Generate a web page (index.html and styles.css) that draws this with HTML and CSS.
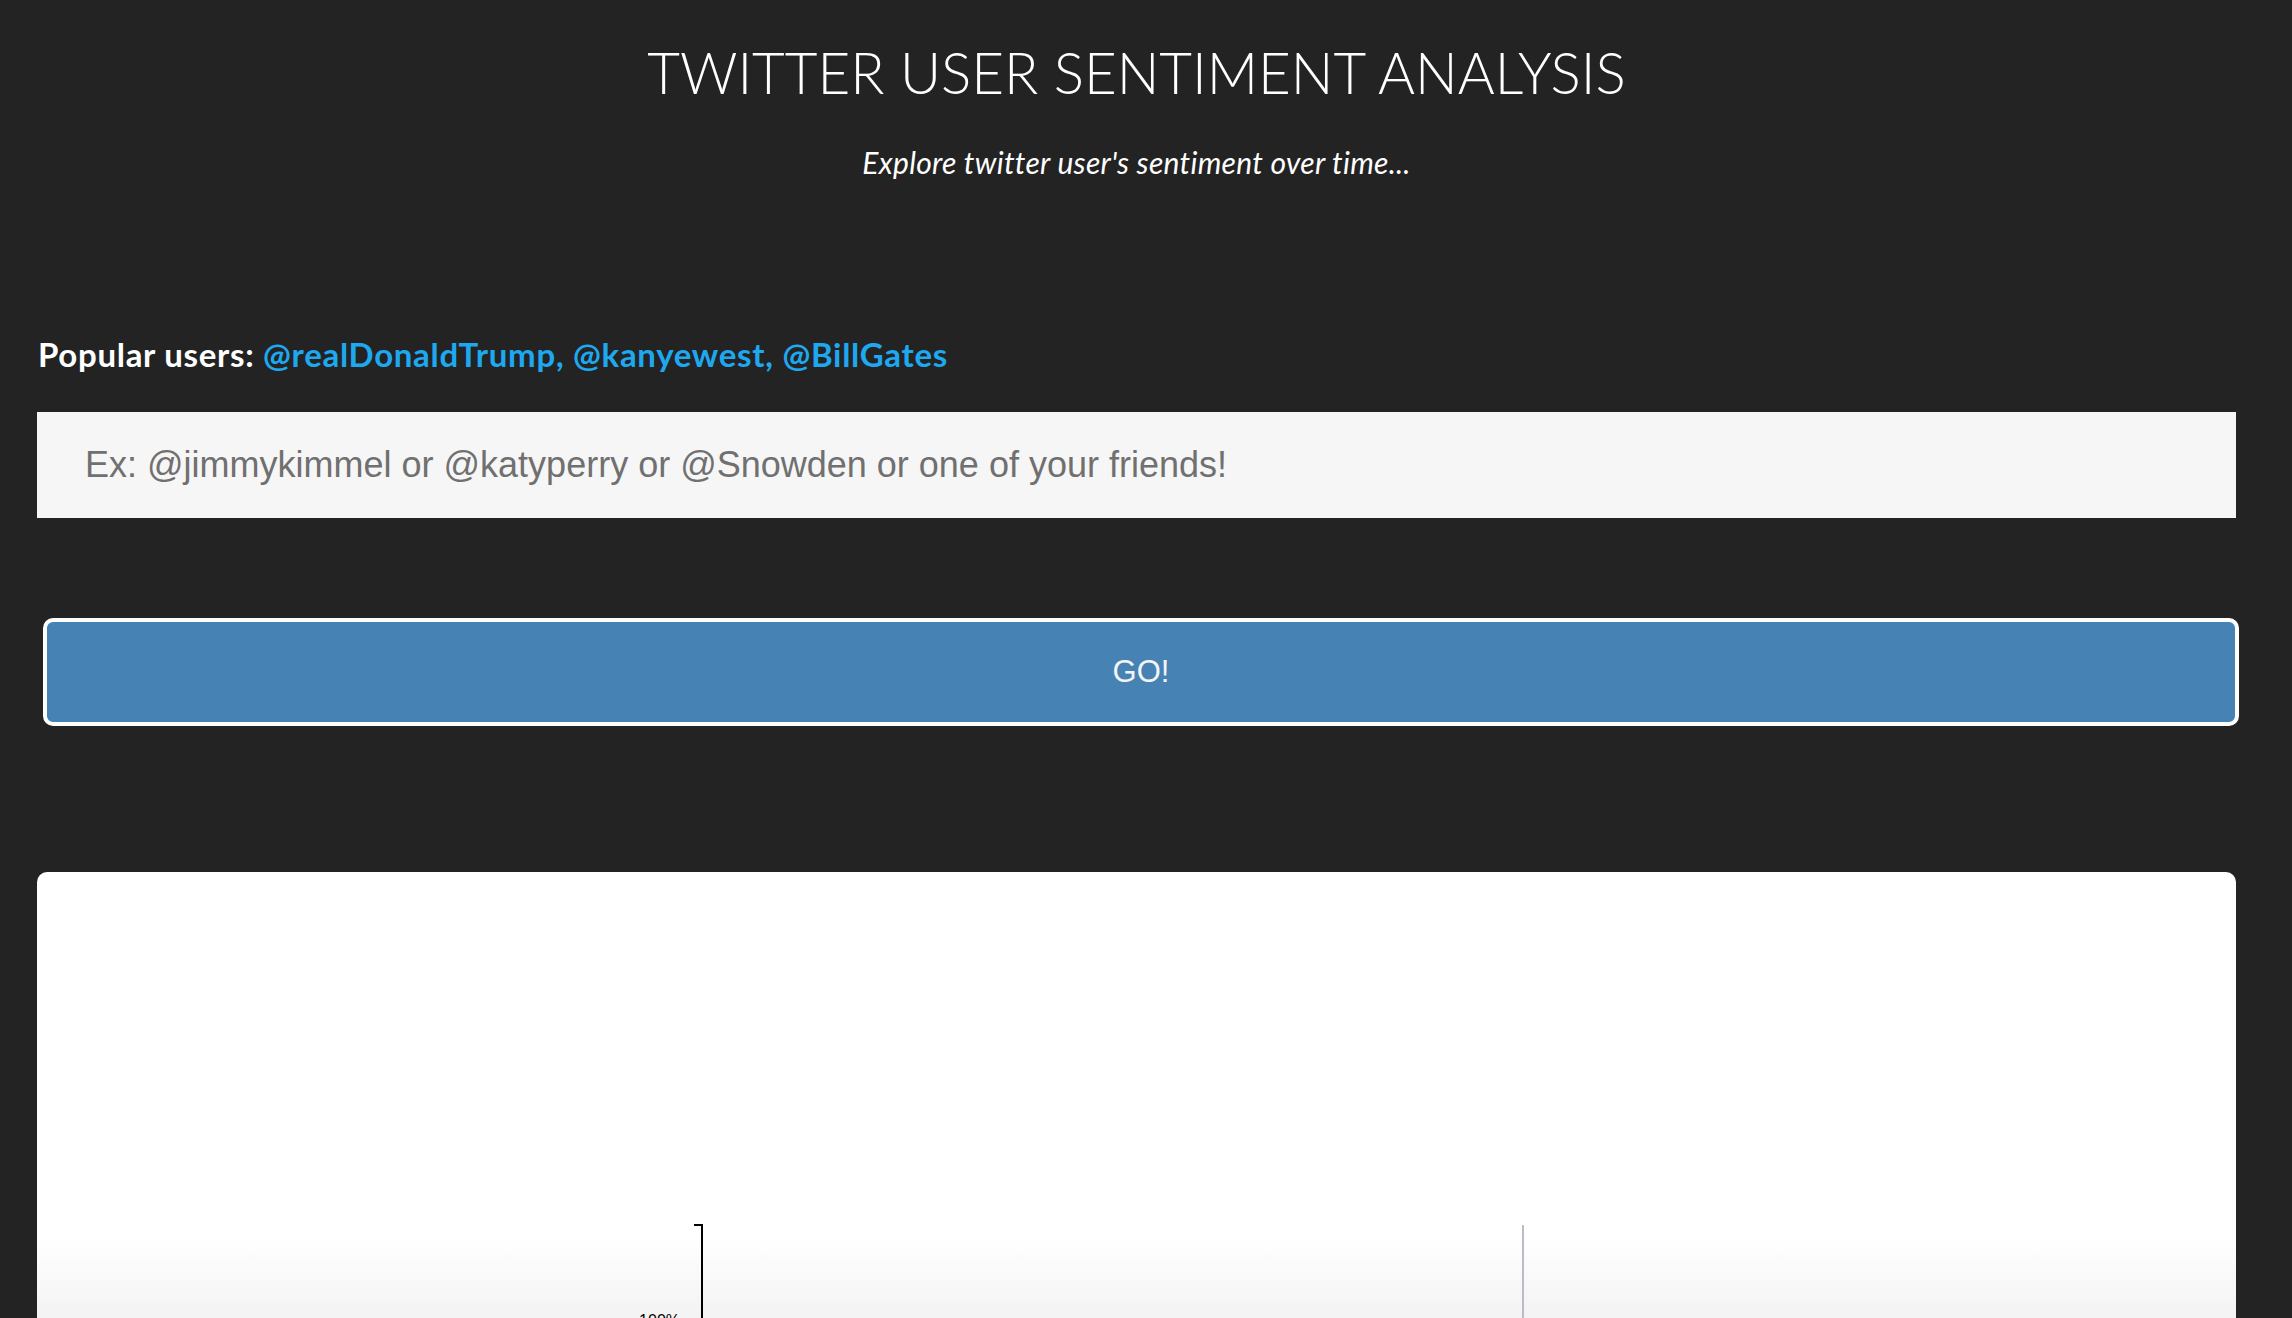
FILE: index.html
```html
<!DOCTYPE html>
<html lang="en">
<head>
<meta charset="utf-8">
<title>Twitter User Sentiment Analysis</title>
<link rel="stylesheet" href="styles.css">
</head>
<body>
<main class="main">
  <header class="hero">
    <h1 class="title">TWITTER USER SENTIMENT ANALYSIS</h1>
    <p class="subtitle">Explore twitter user's sentiment over time...</p>
  </header>
  <p class="popular">Popular users: <a class="user" href="#">@realDonaldTrump</a><span class="user">, </span><a class="user" href="#">@kanyewest</a><span class="user">, </span><a class="user" href="#">@BillGates</a></p>
  <input class="search" type="text" placeholder="Ex: @jimmykimmel or @katyperry or @Snowden or one of your friends!">
  <button class="go" type="button">GO!</button>
  <section class="card">
    <svg class="chart" width="2199" height="446" viewBox="0 0 2199 446">
      <line x1="665" y1="353" x2="665" y2="446" stroke="#000" stroke-width="2"/>
      <line x1="657" y1="353" x2="666" y2="353" stroke="#000" stroke-width="2"/>
      <line x1="1486" y1="353" x2="1486" y2="446" stroke="#b9bec6" stroke-width="2"/>
      <text x="643" y="454" font-family="Liberation Sans, sans-serif" font-size="16" text-anchor="end" fill="#000">100%</text>
    </svg>
  </section>
</main>
</body>
</html>
```
FILE: styles.css
```css
html, body {
  margin: 0;
  padding: 0;
}
body {
  background: #232323;
  color: #fff;
  font-family: Lato, "Open Sans", sans-serif;
  overflow: hidden;
}
.main {
  display: flex;
  flex-direction: column;
  padding: 0 56px 0 37px;
}
.hero {
  text-align: center;
  padding-top: 39px;
}
.title {
  margin: 0;
  font-family: Lato, sans-serif;
  font-weight: 300;
  font-size: 56.5px;
  line-height: 67px;
  color: #fff;
}
.subtitle {
  margin: 39px 0 0;
  font-family: Lato, sans-serif;
  font-style: italic;
  font-weight: 400;
  font-size: 30px;
  line-height: 34px;
  letter-spacing: 0.3px;
  color: #fff;
}
.popular {
  margin: 156px 0 0;
  padding-left: 1px;
  font-family: Lato, sans-serif;
  font-weight: 700;
  font-size: 33px;
  line-height: 38px;
  letter-spacing: 0.7px;
  color: #fff;
}
.user {
  color: #1ea8ef;
  text-decoration: none;
}
.search {
  margin-top: 39px;
  height: 106px;
  box-sizing: border-box;
  border: none;
  outline: none;
  background: #f6f6f6;
  padding: 0 0 0 48px;
  font-family: "Liberation Sans", Arial, sans-serif;
  font-size: 36px;
  color: #333;
}
.search::placeholder {
  color: #707070;
}
.go {
  margin: 100px -3px 0 6px;
  height: 108px;
  box-sizing: border-box;
  border: 4px solid #fff;
  border-radius: 10px;
  background: #4682b4;
  color: #f4f4f4;
  font-family: "Liberation Sans", Arial, sans-serif;
  font-size: 31px;
  cursor: pointer;
}
.card {
  margin-top: 146px;
  height: 446px;
  background: linear-gradient(to bottom, #ffffff 0%, #ffffff 82%, #f3f3f3 100%);
  border-radius: 10px 10px 0 0;
  overflow: hidden;
}
.chart {
  display: block;
}
```
